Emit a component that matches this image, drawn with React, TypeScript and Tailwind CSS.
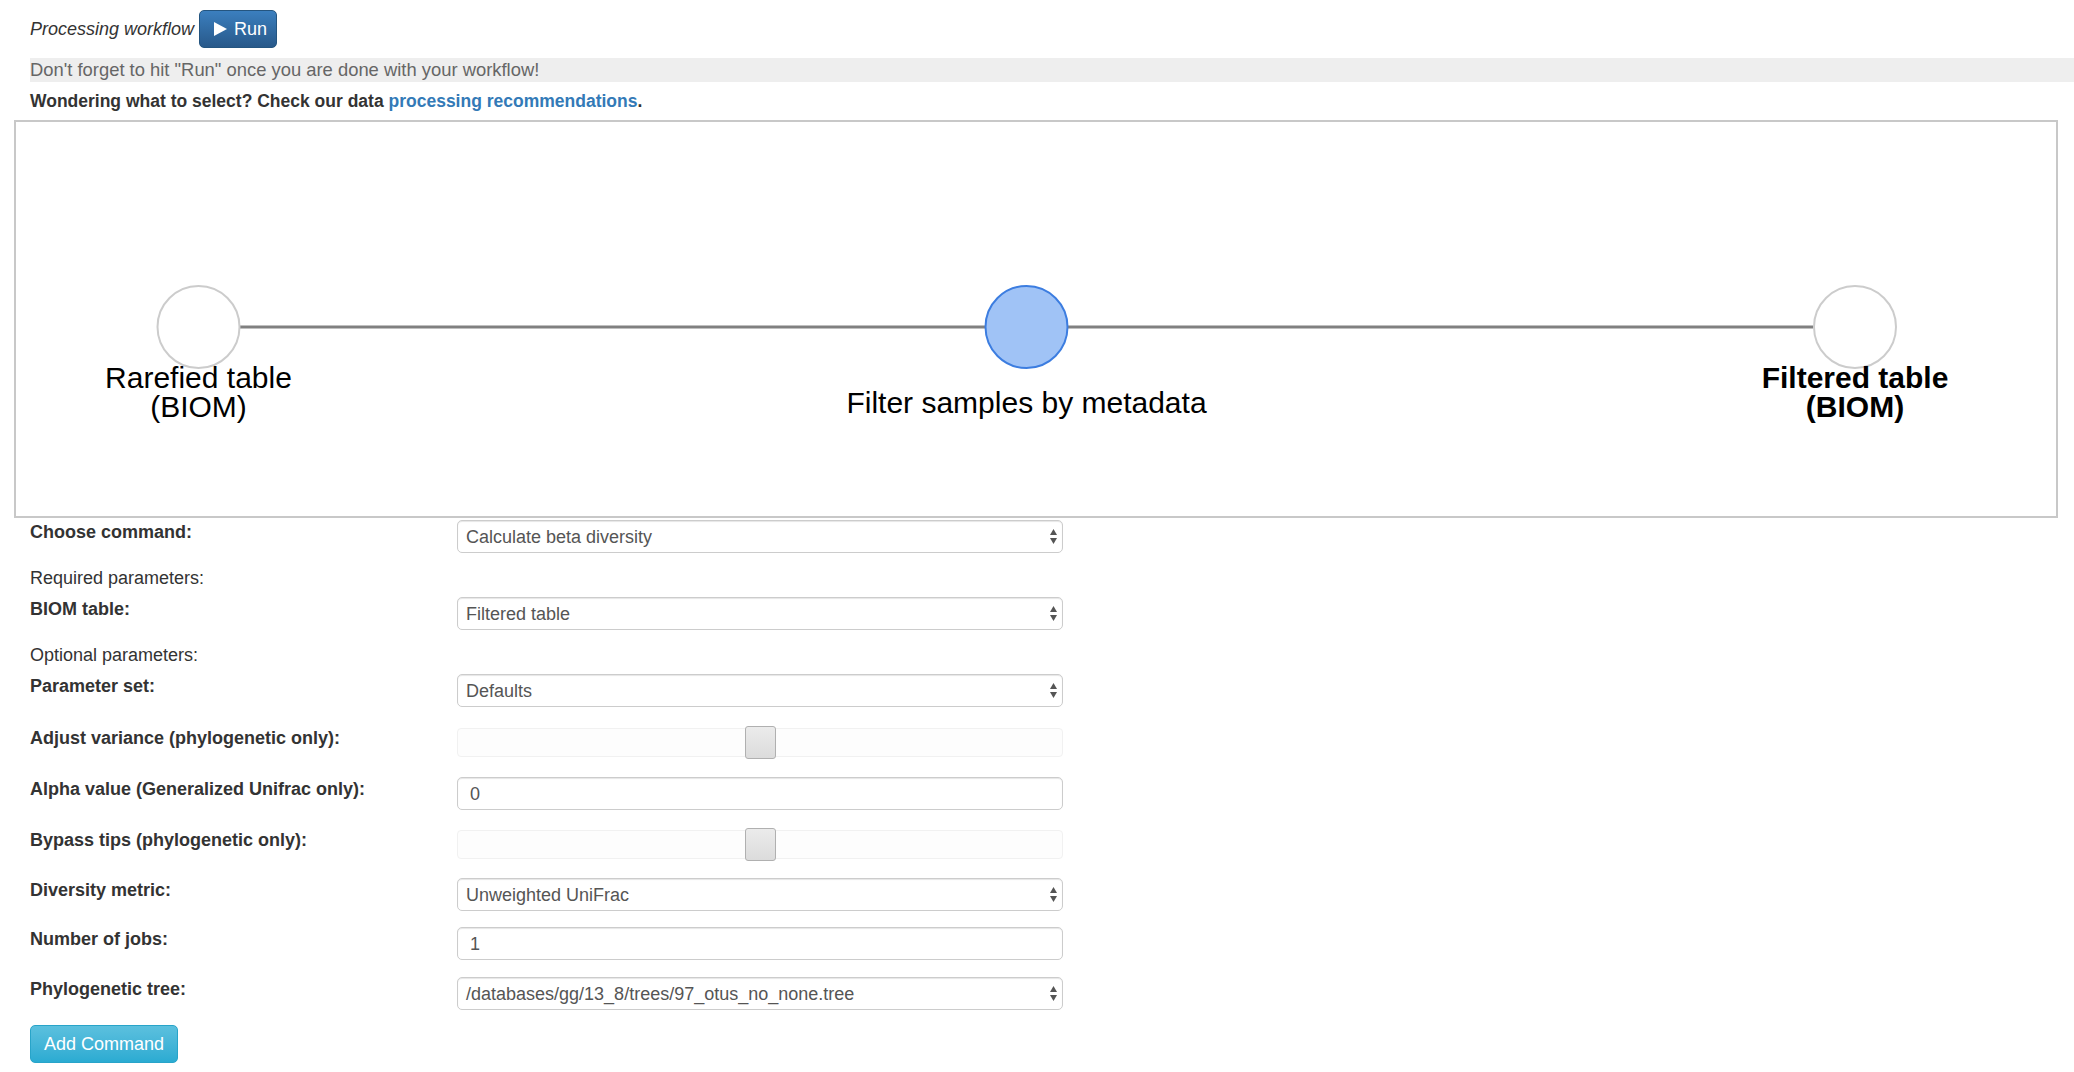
import React from "react";

function Arrows() {
  return (
    <svg width="7" height="15" viewBox="0 0 7 15" className="mr-[5px] shrink-0">
      <polygon points="0,6 3.5,0 7,6" fill="#555" />
      <polygon points="0,9 7,9 3.5,15" fill="#555" />
    </svg>
  );
}

function Select({ value }: { value: string }) {
  return (
    <div className="w-[606px] h-[33px] border border-[#cccccc] rounded-[5px] shadow-[inset_0_1px_1px_rgba(0,0,0,0.1)] flex items-center pl-[8px] text-[18px] text-[#555] bg-white">
      <span className="flex-1 leading-[24px] whitespace-nowrap">{value}</span>
      <Arrows />
    </div>
  );
}

function Input({ value }: { value: string }) {
  return (
    <div className="w-[606px] h-[33px] border border-[#cccccc] rounded-[5px] shadow-[inset_0_1px_1px_rgba(0,0,0,0.1)] flex items-center pl-[12px] text-[18px] text-[#555] bg-white">
      <span className="leading-[24px]">{value}</span>
    </div>
  );
}

function Slider() {
  return (
    <div className="relative w-[606px] h-[33px] flex items-center justify-center">
      <div className="absolute left-0 right-0 top-[2px] bottom-[2px] border border-[#f1f1f1] rounded-[4px] bg-[#fdfdfd]" />
      <div className="relative w-[31px] h-[33px] rounded-[3px] border border-[#b0b0b0] bg-gradient-to-b from-[#ebebeb] to-[#dcdcdc]" />
    </div>
  );
}

function Row({
  label,
  children,
  className = "",
}: {
  label: string;
  children: React.ReactNode;
  className?: string;
}) {
  return (
    <div className={"flex items-start pl-[30px] " + className}>
      <div className="w-[427px] text-[18px] leading-[24px] font-bold text-[#333]">{label}</div>
      {children}
    </div>
  );
}

export default function App() {
  return (
    <div className="w-[2074px] min-h-[1072px] bg-white font-['Liberation_Sans',Arial,sans-serif] text-[#333]">
      {/* Title row */}
      <div className="flex items-center pt-[10px] pl-[30px]">
        <span className="italic text-[18px] leading-[24px] text-[#333]">Processing workflow</span>
        <button className="ml-[5px] w-[78px] h-[38px] flex items-center pl-[14px] rounded-[5px] border border-[#245580] bg-gradient-to-b from-[#3b7fbf] to-[#28598a] text-white text-[18px]">
          <svg width="13" height="14" viewBox="0 0 13 14" className="shrink-0">
            <polygon points="0,0 13,7 0,14" fill="#fff" />
          </svg>
          <span className="ml-[7px] leading-[24px]">Run</span>
        </button>
      </div>

      {/* Notice bar */}
      <div className="mt-[10px] ml-[30px] h-[24px] bg-[#eeeeee] text-[18.4px] leading-[24px] text-[#666]">
        Don't forget to hit "Run" once you are done with your workflow!
      </div>

      {/* Wondering line */}
      <div className="mt-[7px] pl-[30px] text-[17.5px] leading-[24px] font-bold text-[#333]">
        Wondering what to select? Check our data{" "}
        <span className="text-[#337ab7]">processing recommendations</span>.
      </div>

      {/* Diagram */}
      <div className="mt-[7px] ml-[14px] mr-[16px] h-[398px] border-2 border-[#c8c8c8]">
        <svg className="block w-full h-full" viewBox="0 0 2040 394">
          <line x1="224" y1="205" x2="1797" y2="205" stroke="#808080" strokeWidth="3" />
          <circle cx="182.5" cy="205" r="41" fill="#fff" stroke="#cccccc" strokeWidth="2" />
          <circle cx="1010.5" cy="205" r="41" fill="#a0c3f6" stroke="#3c7de0" strokeWidth="2" />
          <circle cx="1839" cy="205" r="41" fill="#fff" stroke="#cccccc" strokeWidth="2" />
          <text
            x="182.5"
            y="266"
            textAnchor="middle"
            fontSize="30"
            fill="#000"
            fontFamily="'Liberation Sans', Arial, sans-serif"
          >
            Rarefied table
          </text>
          <text
            x="182.5"
            y="295"
            textAnchor="middle"
            fontSize="30"
            fill="#000"
            fontFamily="'Liberation Sans', Arial, sans-serif"
          >
            (BIOM)
          </text>
          <text
            x="1010.5"
            y="291"
            textAnchor="middle"
            fontSize="30"
            fill="#000"
            fontFamily="'Liberation Sans', Arial, sans-serif"
          >
            Filter samples by metadata
          </text>
          <text
            x="1839"
            y="266"
            textAnchor="middle"
            fontSize="30"
            fontWeight="bold"
            fill="#000"
            fontFamily="'Liberation Sans', Arial, sans-serif"
          >
            Filtered table
          </text>
          <text
            x="1839"
            y="295"
            textAnchor="middle"
            fontSize="30"
            fontWeight="bold"
            fill="#000"
            fontFamily="'Liberation Sans', Arial, sans-serif"
          >
            (BIOM)
          </text>
        </svg>
      </div>

      {/* Form */}
      <Row label="Choose command:" className="mt-[2px]">
        <Select value="Calculate beta diversity" />
      </Row>
      <div className="mt-[13px] pl-[30px] text-[18px] leading-[24px] text-[#333]">Required parameters:</div>
      <Row label="BIOM table:" className="mt-[7px]">
        <Select value="Filtered table" />
      </Row>
      <div className="mt-[13px] pl-[30px] text-[18px] leading-[24px] text-[#333]">Optional parameters:</div>
      <Row label="Parameter set:" className="mt-[7px]">
        <Select value="Defaults" />
      </Row>
      <Row label="Adjust variance (phylogenetic only):" className="mt-[19px]">
        <Slider />
      </Row>
      <Row label="Alpha value (Generalized Unifrac only):" className="mt-[18px]">
        <Input value="0" />
      </Row>
      <Row label="Bypass tips (phylogenetic only):" className="mt-[18px]">
        <Slider />
      </Row>
      <Row label="Diversity metric:" className="mt-[17px]">
        <Select value="Unweighted UniFrac" />
      </Row>
      <Row label="Number of jobs:" className="mt-[16px]">
        <Input value="1" />
      </Row>
      <Row label="Phylogenetic tree:" className="mt-[17px]">
        <Select value="/databases/gg/13_8/trees/97_otus_no_none.tree" />
      </Row>
      <div className="mt-[15px] pl-[30px]">
        <button className="w-[148px] h-[38px] rounded-[5px] border border-[#28a4c9] bg-gradient-to-b from-[#5bc0de] to-[#2aabd2] text-white text-[18px] leading-[24px]">
          Add Command
        </button>
      </div>
    </div>
  );
}
